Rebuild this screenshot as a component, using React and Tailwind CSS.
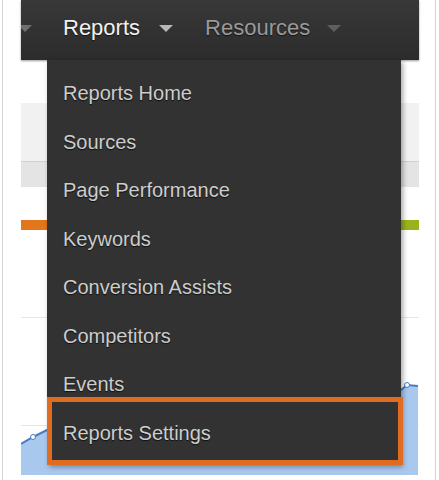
import React from "react";

const menuItems = [
  "Reports Home",
  "Sources",
  "Page Performance",
  "Keywords",
  "Conversion Assists",
  "Competitors",
  "Events",
  "Reports Settings",
];

const Caret = ({ className }) => (
  <svg width="14" height="7" viewBox="0 0 14 7" className={className} aria-hidden>
    <path d="M0 0 L14 0 L7 7 Z" fill="currentColor" />
  </svg>
);

const AreaChart = () => (
  <svg width="397" height="95" viewBox="0 0 397 95" className="absolute left-0 top-[380px]" aria-hidden>
    <polygon points="0,64 12,57 26,50 60,40 380,10 386,5 397,6 397,95 0,95" fill="#a9c8ee" />
    <polyline points="0,64 12,57 26,50 60,40 380,10 386,5 397,6" fill="none" stroke="#4a7cc4" strokeWidth="2" />
    <circle cx="12" cy="57" r="2.5" fill="#fff" stroke="#4a7cc4" strokeWidth="1" />
    <circle cx="386" cy="5" r="2.5" fill="#fff" stroke="#4a7cc4" strokeWidth="1" />
  </svg>
);

export default function App() {
  return (
    <div className="h-[480px] w-[439px] overflow-hidden bg-white pl-[2px] font-['Liberation_Sans',Arial,sans-serif]">
      <div className="h-full w-[434px] border-x border-[#d4d4d4] pl-[18px] pr-[16px]">
        <div className="relative h-full">
          {/* top nav */}
          <nav className="flex h-[60px] items-center overflow-hidden bg-gradient-to-b from-[#383838] to-[#2c2c2c] pb-[4px] shadow-[0_1px_2px_rgba(0,0,0,0.4)]">
            <span className="-ml-[3px] mt-[1px] flex text-[#6f6f6f]">
              <Caret />
            </span>
            <span className="ml-[31px] text-[22px] leading-none text-[#f2f2f2] [text-shadow:0_1px_1px_rgba(0,0,0,0.6)]">
              Reports
            </span>
            <Caret className="ml-[19px] mt-[1px] text-[#b8b8b8]" />
            <span className="ml-[32px] text-[22px] leading-none text-[#9a9a9a] [text-shadow:0_1px_1px_rgba(0,0,0,0.6)]">
              Resources
            </span>
            <Caret className="ml-[17px] mt-[1px] text-[#5e5e5e]" />
          </nav>

          {/* page behind the menu */}
          <div className="h-[43px]" />
          <div className="h-[58px] bg-[#f1f1f1]" />
          <div className="h-px bg-[#cfcfcf]" />
          <div className="h-[25px] bg-[#e4e4e4]" />
          <div className="h-[33px]" />
          <div className="flex h-[10px]">
            <div className="w-[300px] bg-[#e2761b]" />
            <div className="flex-1 bg-[#9ab31c]" />
          </div>
          <div className="h-[87px]" />
          <div className="h-px bg-[#e6e6e6]" />
          <div className="h-[107px]" />
          <div className="h-px bg-[#e6e6e6]" />
          <AreaChart />

          {/* dropdown */}
          <div className="absolute left-[26px] top-[60px] h-[405px] w-[354px] bg-[#323232] pt-[9px] shadow-[2px_2px_5px_rgba(0,0,0,0.35)]">
            {menuItems.map((item) => (
              <div
                key={item}
                className="flex h-[48.5px] items-center pl-[16px] text-[20px] leading-none text-[#cdcdcd] [text-shadow:0_1px_1px_rgba(0,0,0,0.7)]"
              >
                {item}
              </div>
            ))}
            <div className="absolute left-0 top-[337px] h-[68px] w-[356px] border-[5px] border-[#df6c20]" />
          </div>
        </div>
      </div>
    </div>
  );
}
